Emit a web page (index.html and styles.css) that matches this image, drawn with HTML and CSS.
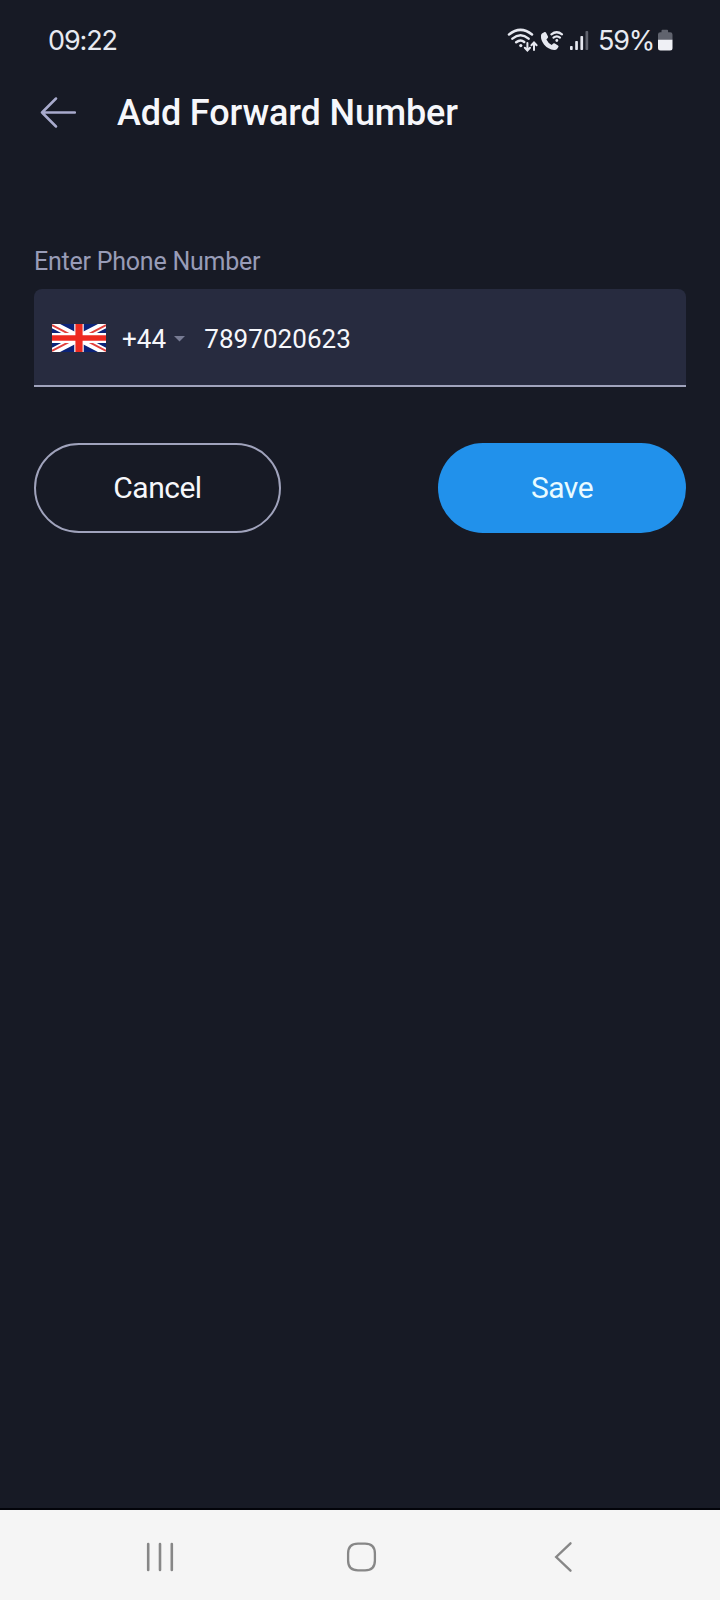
FILE: index.html
```html
<!DOCTYPE html>
<html lang="en">
<head>
<meta charset="utf-8">
<title>Add Forward Number</title>
<link rel="stylesheet" href="styles.css">
</head>
<body>
<div class="screen">
  <div class="status">
    <span class="time">09:22</span>
    <div class="indicators">
      <svg class="wifi" width="32" height="26" viewBox="506 28 32 26" fill="none" stroke="#e6e8f0" stroke-width="2.5" stroke-linecap="round">
        <path d="M508 34.5Q519.5 25.2 531 34.5M511.4 38.6Q519.5 32 527.6 38.6M515.2 42.3Q519.5 38.8 523.2 42"/>
        <circle cx="519.8" cy="45.6" r="1.6" fill="#e6e8f0" stroke="none"/>
        <path stroke-width="2" d="M526.4 43v7.3M523.8 47.8l2.6 2.7 2.6-2.7M533 50v-7.2M530.4 45.2l2.6-2.7 2.6 2.7"/>
      </svg>
      <svg class="call" width="26" height="26" viewBox="539 28 26 26" fill="none" stroke="#e6e8f0" stroke-linecap="round">
        <path fill="#e6e8f0" stroke="none" d="M542 33.4L544.6 32Q545.6 31.7 546.1 32.7L548 36.4Q548.4 37.3 547.7 38L546.4 39.4Q548 42.9 551.7 45L553.2 43.6Q554 43 554.9 43.5L558 45.4Q558.9 46 558.4 46.9L557 49Q556.1 50.1 554.2 50Q548 49.5 544 44.6Q540.6 40 541 35.6Q541.2 34 542 33.4Z"/>
        <path stroke-width="2.2" d="M551.4 34.3Q556.7 30.2 562 34.3M553.5 37.6Q556.8 35.1 560 37.6"/>
        <circle cx="556.8" cy="40.5" r="1.4" fill="#e6e8f0" stroke="none"/>
      </svg>
      <svg class="signal" width="20" height="26" viewBox="569 28 20 26" fill="#e6e8f0">
        <rect x="570" y="46" width="2.7" height="4" rx=".8"/><rect x="575.2" y="41" width="2.7" height="9" rx=".8"/><rect x="580.4" y="36" width="2.7" height="14" rx=".8"/><rect x="585.5" y="31" width="2.7" height="19" rx=".8" fill="#60636e"/>
      </svg>
      <span class="percent">59%</span>
      <svg class="battery" width="16" height="26" viewBox="656.5 28 16 26">
        <path fill="#60636e" d="M661 30.8q0-1 1-1h4.6q1 0 1 1v1.4h2.1q2.3 0 2.3 2.3V40h-14.5v-5.5q0-2.3 2.3-2.3h1.2z"/>
        <path fill="#eff0f5" d="M657.5 39.8H672V48q0 2.500-2.500 2.500H660q-2.500 0-2.500-2.500z"/>
      </svg>
    </div>
  </div>
  <header class="header">
    <svg width="38" height="34" viewBox="0 0 38 34" fill="none" stroke="#a9abcd" stroke-width="2.5" stroke-linecap="round" stroke-linejoin="round"><path d="M37 16.500H4M18 2.500L4 16.500l14 14"/></svg>
    <h1 class="title">Add Forward Number</h1>
  </header>
  <main class="form">
    <label class="label" for="phone">Enter Phone Number</label>
    <div class="field">
      <svg class="flag" width="54" height="28" viewBox="0 0 60 30" preserveAspectRatio="none">
        <path fill="#0b2378" d="M0 0h60v30H0z"/>
        <path d="M0 0l60 30M60 0L0 30" stroke="#fff" stroke-width="8"/>
        <path d="M0 1.200L24 13.200M36 16.800L60 28.800M60 1.200L36 13.200M24 16.800L0 28.800" stroke="#e0403c" stroke-width="2"/>
        <path d="M30 0v30M0 15h60" stroke="#fff" stroke-width="10.500"/>
        <path d="M30 0v30" stroke="#ee2a20" stroke-width="8"/>
        <path d="M0 15h60" stroke="#ee2a20" stroke-width="6"/>
      </svg>
      <span class="code">+44</span>
      <svg class="caret" width="11" height="6" viewBox="0 0 11 6"><path d="M0 0h11L5.500 5.500z" fill="#777b93"/></svg>
      <span class="number" id="phone">7897020623</span>
    </div>
    <div class="actions">
      <button class="button cancel">Cancel</button>
      <button class="button save">Save</button>
    </div>
  </main>
  <nav class="nav">
    <svg width="34" height="34" viewBox="0 0 34 34" stroke="#878787" stroke-width="2.6" stroke-linecap="round"><path d="M5.200 4v26M17 4v26M28.800 4v26"/></svg>
    <svg width="34" height="34" viewBox="0.500 0 34 34" fill="none" stroke="#878787" stroke-width="2.300"><path d="M13.500 3.600h7q9.900 0 9.900 9.900v7q0 9.900-9.900 9.900h-7q-9.900 0-9.900-9.900v-7q0-9.900 9.900-9.900z"/></svg>
    <svg width="34" height="34" viewBox="0 0 34 34" fill="none" stroke="#878787" stroke-width="2.400" stroke-linecap="round"><path d="M24.500 3.300L10.200 17l14.300 13.700"/></svg>
  </nav>
</div>
</body>
</html>
```
FILE: styles.css
```css
* { box-sizing: border-box; }
body { margin: 0; font-family: Roboto, "Liberation Sans", sans-serif; }
.screen {
  width: 720px;
  height: 1600px;
  display: flex;
  flex-direction: column;
  background: #171a25;
  color: #f6f7fb;
}
.status {
  height: 80px;
  padding: 0 47px 0 48px;
  display: flex;
  align-items: center;
  justify-content: space-between;
}
.time, .percent {
  margin-top: 2px;
  font-family: Inter, Roboto, sans-serif;
  font-size: 27px;
  line-height: 32px;
  color: #e8eaf1;
}
.time { letter-spacing: -1.1px; }
.indicators { display: flex; align-items: center; }
.wifi, .call, .signal, .battery { flex: none; margin-top: 2px; }
.signal { margin-left: 4px; }
.percent { width: 55px; margin-left: 9px; letter-spacing: -1.2px; }
.battery { margin-left: 4px; }
.header {
  height: 64px;
  padding: 1px 0 0 38px;
  display: flex;
  align-items: center;
  gap: 41px;
}
.title { margin: 1px 0 0; font-size: 36px; line-height: 42px; font-weight: 500; letter-spacing: -0.13px; }
.form { flex: 1; padding: 103px 34px 0; }
.label { display: block; font-size: 25px; line-height: 30px; letter-spacing: -0.23px; color: #989cb7; }
.field {
  height: 98px;
  margin-top: 12px;
  padding-left: 18px;
  display: flex;
  align-items: center;
  background: #272b3f;
  border-bottom: 2px solid #a0a3bc;
  border-radius: 8px 8px 0 0;
}
.flag { margin-top: 1px; }
.code { margin-left: 16px; font-size: 26px; line-height: 32px; letter-spacing: 0.1px; margin-top: 4px; }
.caret { margin: 3px 0 0 8px; }
.number { margin-left: 19px; font-size: 26px; line-height: 32px; letter-spacing: 0.05px; margin-top: 4px; }
.actions { margin-top: 56px; display: flex; justify-content: space-between; }
.button {
  width: 247px;
  height: 90px;
  padding: 0 0 1px;
  border: 0;
  border-radius: 46px;
  font: 400 30px/36px Roboto, "Liberation Sans", sans-serif;
  letter-spacing: -0.5px;
  color: #f6f7fb;
}
.cancel { background: transparent; border: 2px solid #a0a3bc; }
.save { width: 248px; background: #2191eb; color: #e9fbff; }
.nav {
  height: 92px;
  flex: none;
  padding: 4px 140px 0 143px;
  display: flex;
  align-items: center;
  justify-content: space-between;
  background: #f5f5f5;
  border-top: 2px solid #03040a;
}
```
